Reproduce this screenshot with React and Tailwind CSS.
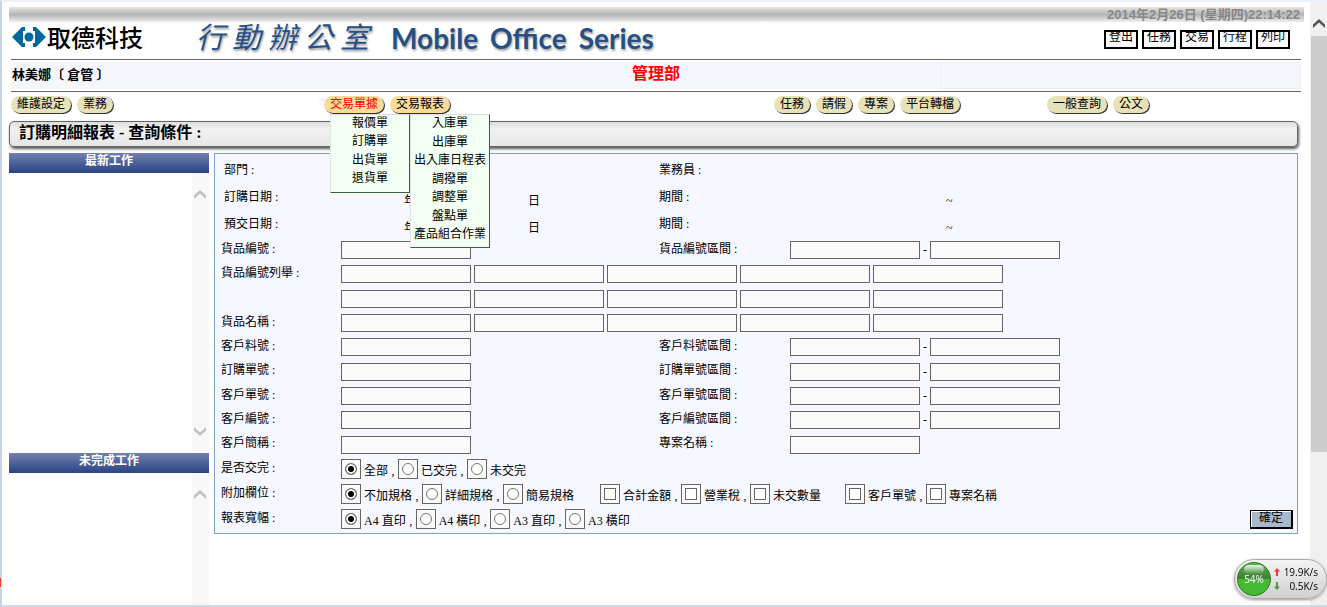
import React, { useState } from "react";

const navGroups = [
  [{ label: "維護設定" }, { label: "業務" }],
  [
    {
      label: "交易單據",
      active: true,
      warm: true,
      menuClass: "left-[6px] h-[79px] pb-[6px]",
      menu: ["報價單", "訂購單", "出貨單", "退貨單"],
    },
    {
      label: "交易報表",
      warm: true,
      menuClass: "left-5 h-[134px] pb-[5px]",
      menu: ["入庫單", "出庫單", "出入庫日程表", "調撥單", "調整單", "盤點單", "產品組合作業"],
    },
  ],
  [{ label: "任務" }, { label: "請假" }, { label: "專案" }, { label: "平台轉檔" }],
  [{ label: "一般查詢" }, { label: "公文" }],
];

const searchRows = [
  { label: "貨品編號", height: "h-6", count: 1, right: "貨品編號區間", range: true },
  { label: "貨品編號列舉", height: "h-6", count: 5 },
  { label: "", height: "h-[25px]", count: 5 },
  { label: "貨品名稱", height: "h-6", count: 5 },
  { label: "客戶料號", height: "h-6", count: 1, right: "客戶料號區間", range: true },
  { label: "訂購單號", height: "h-[25px]", count: 1, right: "訂購單號區間", range: true },
  { label: "客戶單號", height: "h-6", count: 1, right: "客戶單號區間", range: true },
  { label: "客戶編號", height: "h-6", count: 1, right: "客戶編號區間", range: true },
  { label: "客戶簡稱", height: "h-[25px]", count: 1, right: "專案名稱" },
];

const TextInput = ({ label }) => (
  <input
    type="text"
    aria-label={label}
    className="w-[130px] h-[18px] shrink-0 border border-[#666] bg-[#fafafa] px-1 outline-none"
  />
);

const Arrow = ({ down, className }) => (
  <svg viewBox="0 0 12 9" className={`w-3 h-[9px] ${className}`} fill="currentColor">
    {down ? <path d="M0 0V3.5L6 9L12 3.5V0L6 5.5Z" /> : <path d="M0 9V5.5L6 0L12 5.5V9L6 3.5Z" />}
  </svg>
);

const Choice = ({ type = "radio", name, label, comma, checked, onChange, className = "" }) => (
  <label className={`flex items-center shrink-0 whitespace-nowrap ${className}`}>
    <span className="w-5 h-5 mr-[3px] flex items-center justify-center border border-[#666] bg-[#fafaf8]">
      {type === "radio" ? (
        <input
          type="radio"
          name={name}
          checked={checked}
          onChange={onChange}
          className="appearance-none w-3 h-3 rounded-full border border-[#777] bg-white checked:bg-black checked:shadow-[inset_0_0_0_2px_white]"
        />
      ) : (
        <input
          type="checkbox"
          name={name}
          className="appearance-none w-3 h-3 border border-[#666] bg-white checked:bg-black"
        />
      )}
    </span>
    <span className="pt-[3px]">{label}</span>
    {comma && <span className="w-[10px] pt-[3px] text-center">,</span>}
  </label>
);

const RadioGroup = ({ name, options }) => {
  const [value, setValue] = useState(options[0]);
  return options.map((option, i) => (
    <Choice
      key={option}
      name={name}
      label={option}
      comma={i < options.length - 1}
      checked={value === option}
      onChange={() => setValue(option)}
    />
  ));
};

const NavItem = ({ item }) => (
  <li className="relative">
    <button
      type="button"
      className={`block h-[17px] px-[6px] rounded-full leading-[15px] whitespace-nowrap shadow-[1px_1px_0_#333] ${
        item.warm ? "bg-[#f8dc98]" : "bg-[#e8e2b8]"
      } ${item.active ? "text-[#f00]" : "text-black"}`}
    >
      {item.label}
    </button>
    {item.menu && (
      <ul
        className={`absolute z-10 top-[18px] w-20 flex flex-col justify-between border-t border-l border-t-[#ddd] border-l-[#e4e4e4] border-r border-b border-r-[#363] border-b-[#363] bg-[#f2fff2] ${item.menuClass}`}
      >
        {item.menu.map((entry) => (
          <li key={entry} className="text-center leading-4 whitespace-nowrap">
            <a href="#">{entry}</a>
          </li>
        ))}
      </ul>
    )}
  </li>
);

const Logo = () => (
  <svg viewBox="0 0 34 22" className="w-[34px] h-[22px] shrink-0" fill="#0068a0">
    <path d="M10 1H13V5H11V17H13V21H10L0 11Z" />
    <path d="M24 1H21V5H23V17H21V21H24L34 11Z" />
    <circle cx="17" cy="11" r="4.5" />
  </svg>
);

const SidePanel = ({ title, className, both }) => (
  <section className={`flex flex-col ${className}`}>
    <h2 className="h-5 text-center font-bold leading-[17px] text-white bg-linear-to-b from-[#7280b0] to-[#2a4383]">
      {title}
    </h2>
    <div className="flex-1 flex justify-end">
      <div className="w-[17px] pt-[17px] pb-[17px] pr-[1px] flex flex-col items-center justify-between bg-[#f8f8f8] text-[#c0c0c0]">
        <Arrow />
        {both && <Arrow down />}
      </div>
    </div>
  </section>
);

const ReportForm = () => {
  const grid = "grid grid-cols-[120px_318px_131px_1fr] items-center";
  return (
    <form
      onSubmit={(e) => e.preventDefault()}
      className="flex-1 min-w-0 self-start border border-[#7ba5cf] bg-[#f7f7ff] pl-[6px] pt-[3px] pb-[2px]"
    >
      <div className={`${grid} h-[26px]`}>
        <span className="pl-[3px]">部門 :</span>
        <span />
        <span>業務員 :</span>
      </div>
      {["訂購日期", "預交日期"].map((label) => (
        <div key={label} className={`${grid} h-[27px]`}>
          <span className="pl-[3px]">{label} :</span>
          <span className="flex gap-28 pl-[63px] pt-2">
            <span>年</span>
            <span>日</span>
          </span>
          <span>期間 :</span>
          <span className="pl-[156px] pt-2">~</span>
        </div>
      ))}

      <div className="pt-[1px]">
        {searchRows.map((row, index) => (
          <div key={index} className={`${grid} ${row.height}`}>
            <span className="pb-[3px]">{row.label && `${row.label} :`}</span>
            <div className="flex gap-[3px]">
              {Array.from({ length: row.count }, (_, i) => (
                <TextInput key={i} label={`${row.label || "貨品編號列舉"} ${i + 1}`} />
              ))}
            </div>
            {row.right && (
              <>
                <span className="pb-[3px]">{row.right} :</span>
                <div className="flex items-center">
                  <TextInput label={row.right} />
                  {row.range && (
                    <>
                      <span className="w-[10px] text-center">-</span>
                      <TextInput label={`${row.right} 2`} />
                    </>
                  )}
                </div>
              </>
            )}
          </div>
        ))}
      </div>

      <div className="flex items-center h-6">
        <span className="w-[120px] shrink-0 pb-[3px]">是否交完 :</span>
        <RadioGroup name="done" options={["全部", "已交完", "未交完"]} />
      </div>
      <div className="flex items-center h-[26px]">
        <span className="w-[120px] shrink-0 pb-[3px]">附加欄位 :</span>
        <RadioGroup name="spec" options={["不加規格", "詳細規格", "簡易規格"]} />
        <Choice type="checkbox" name="total" label="合計金額" comma className="ml-[26px]" />
        <Choice type="checkbox" name="tax" label="營業稅" comma />
        <Choice type="checkbox" name="pending" label="未交數量" />
        <Choice type="checkbox" name="customerNo" label="客戶單號" comma className="ml-6" />
        <Choice type="checkbox" name="project" label="專案名稱" />
      </div>
      <div className="flex items-center h-6 pr-1">
        <span className="w-[120px] shrink-0 pb-[3px]">報表寬幅 :</span>
        <RadioGroup name="paper" options={["A4 直印", "A4 橫印", "A3 直印", "A3 橫印"]} />
        <button
          type="submit"
          className="ml-auto w-[43px] h-[19px] border border-r-2 border-b-2 border-black bg-[#a9b9cb] leading-[13px] shadow-[inset_1px_1px_0_white]"
        >
          確定
        </button>
      </div>
    </form>
  );
};

const SpeedBall = () => (
  <div className="fixed z-20 right-0 bottom-2 w-[93px] h-10 flex items-center rounded-full border border-[#aaa] bg-linear-to-b from-[#f4f4f4] to-[#d0d0d0] shadow-[0_1px_3px_#999] font-['Open_Sans',sans-serif] text-[10px]">
    <div className="relative ml-[2px] w-[34px] h-[34px] shrink-0 flex items-center justify-center rounded-full border border-[#2c7a20] bg-linear-to-b from-[#6cab60] via-[#3c8030] via-48% to-[#45b932] to-52% text-white">
      <span className="absolute top-[2px] left-[6px] w-5 h-[9px] rounded-full bg-linear-to-b from-[#e4f4e0] to-transparent" />
      <span className="relative">54%</span>
    </div>
    <div className="flex-1 pl-[3px] pr-2 leading-[14px]">
      <div className="flex justify-between items-center">
        <svg viewBox="0 0 6 8" className="w-[6px] h-2" fill="#f33">
          <path d="M3 0L6 3.5H4V8H2V3.5H0Z" />
        </svg>
        <span>19.9K/s</span>
      </div>
      <div className="flex justify-between items-center">
        <svg viewBox="0 0 6 8" className="w-[6px] h-2" fill="#4a9c3c">
          <path d="M3 8L6 4.5H4V0H2V4.5H0Z" />
        </svg>
        <span>0.5K/s</span>
      </div>
    </div>
  </div>
);

const App = () => {
  return (
    <div className="relative min-h-screen flex border-t-2 border-t-[#edf2f8] border-b-2 border-b-[#d3d9e3] border-l-2 border-l-[#c5d3e2] bg-white text-black text-[12px] leading-4 font-['Liberation_Serif','Noto_Sans_CJK_TC',serif]">
      <span className="absolute -left-[2px] top-[576px] w-[1px] h-[9px] bg-[#e8432c]" />
      <main className="flex-1 min-w-0 flex flex-col pl-[7px] pr-[6px] pt-[5px]">
        <div className="h-[15px] pr-1 text-right text-[13px] leading-[15px] font-bold text-[#888] bg-linear-to-b from-[#e6e6e6] via-[#b4b4b4] to-[#eee] font-['Liberation_Sans','Noto_Sans_CJK_TC',sans-serif]">
          2014年2月26日 (星期四)22:14:22
        </div>

        <div className="pl-[2px] pr-[3px]">
          <header className="flex items-start h-[38px] border-b border-[#666]">
            <div className="flex items-center pt-1 pl-[1px]">
              <Logo />
              <span className="pl-[1px] text-[24px] leading-5 font-medium font-['Noto_Sans_CJK_TC',sans-serif]">
                取德科技
              </span>
            </div>
            <h1 className="flex items-center pl-[53px] pt-[1px] text-[#264f85] [text-shadow:1px_2px_2px_#aaa]">
              <span className="flex gap-[7px] text-[29px] leading-[30px] italic">
                {[..."行動辦公室"].map((char) => (
                  <span key={char}>{char}</span>
                ))}
              </span>
              <span className="pl-[22px] flex gap-3 text-[28px] leading-[30px] font-bold font-['Lato',sans-serif]">
                <span>Mobile</span>
                <span>Office</span>
                <span>Series</span>
              </span>
            </h1>
            <nav className="ml-auto mr-[11px] mt-2 flex gap-1">
              {["登出", "任務", "交易", "行程", "列印"].map((label) => (
                <button
                  key={label}
                  type="button"
                  className="w-[34px] h-[19px] pb-1 border-2 border-black bg-[#fafafa] leading-[11px] overflow-hidden whitespace-nowrap"
                >
                  {label}
                </button>
              ))}
            </nav>
          </header>

          <div className="my-[2px] h-[27px] grid grid-cols-[361fr_569fr_361fr] bg-[#f6f6ff]">
            <strong className="pl-[1px] text-[13px] leading-[25px]">林美娜〔 倉管 〕</strong>
            <strong className="text-center text-[16px] leading-[23px] text-[#f00]">管理部</strong>
            <span className="border border-[#eee]" />
          </div>

          <ul className="pt-1 border-t border-[#666] grid grid-cols-[313fr_450fr_273fr_254fr]">
            {navGroups.map((group, i) => (
              <li key={i}>
                <ul className="flex gap-[6px]">
                  {group.map((item) => (
                    <NavItem key={item.label} item={item} />
                  ))}
                </ul>
              </li>
            ))}
          </ul>
        </div>

        <h2 className="mt-2 mr-[6px] h-[26px] pl-[9px] rounded-[5px] border border-[#666] bg-linear-to-b from-[#ddd] via-[#f2f2f2] via-30% to-[#e6e6e6] text-[16px] leading-[22px] font-bold shadow-[1px_2px_3px_#555]">
          訂購明細報表 - 查詢條件 :
        </h2>

        <div className="flex-1 mt-[6px] mr-[6px] flex gap-[5px]">
          <aside className="w-[200px] shrink-0 flex flex-col">
            <SidePanel title="最新工作" className="h-[300px]" both />
            <SidePanel title="未完成工作" className="flex-1" />
          </aside>
          <ReportForm />
        </div>
      </main>

      <div className="w-[17px] shrink-0 bg-[#f0f0f0]">
        <div className="h-[34px] pt-[17px] flex justify-center text-[#555]">
          <Arrow />
        </div>
        <div className="ml-[1px] h-[416px] bg-[#cdcdcd]" />
      </div>
      <SpeedBall />
    </div>
  );
};

export default App;
